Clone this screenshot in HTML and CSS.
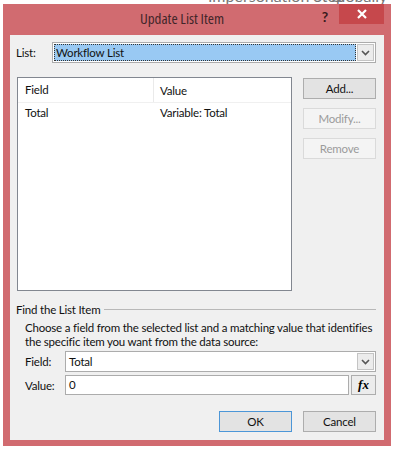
FILE: index.html
```html
<!DOCTYPE html>
<html lang="en">

<head>
    <meta charset="UTF-8">
    <title>Update List Item</title>
    <link rel="stylesheet" href="styles.css">
</head>

<body>

    <div class="backdrop">
        <span class="bg-a">Impersonation Step</span>
        <span class="bg-b">Globally to W</span>
    </div>

    <div class="dialog">

        <div class="titlebar">
            <div class="title">Update List Item</div>
            <div class="help">?</div>
            <div class="close">
                <svg width="12" height="12" viewBox="0 0 12 12">
                    <path d="M2 2 L10 10 M10 2 L2 10" stroke="#fff" stroke-width="2.2" />
                </svg>
            </div>
        </div>

        <div class="content">

            <div class="list-row">
                <label class="lbl-list">List:</label>
                <div class="combo">
                    <div class="combo-text selected">Workflow List</div>
                    <div class="combo-btn">
                        <svg width="9" height="6" viewBox="0 0 9 6">
                            <path d="M1 1 L4.5 4.5 L8 1" fill="none" stroke="#555" stroke-width="1.6" />
                        </svg>
                    </div>
                </div>
            </div>

            <div class="main-row">
                <div class="listview">
                    <div class="lv-head">
                        <div class="col-field">Field</div>
                        <div class="col-value">Value</div>
                    </div>
                    <div class="lv-row">
                        <div class="col-field">Total</div>
                        <div class="col-value">Variable: Total</div>
                    </div>
                </div>
                <div class="side-buttons">
                    <button class="btn">Add...</button>
                    <button class="btn" disabled>Modify...</button>
                    <button class="btn" disabled>Remove</button>
                </div>
            </div>

            <div class="group">
                <div class="group-title">
                    <span>Find the List Item</span>
                    <div class="group-line"></div>
                </div>
                <div class="group-body">
                    <p class="desc">Choose a field from the selected list and a matching value that identifies the specific item you want from the data source:</p>
                    <div class="field-row">
                        <label class="lbl-field">Field:</label>
                        <div class="combo">
                            <div class="combo-text">Total</div>
                            <div class="combo-btn">
                                <svg width="9" height="6" viewBox="0 0 9 6">
                                    <path d="M1 1 L4.5 4.5 L8 1" fill="none" stroke="#555" stroke-width="1.6" />
                                </svg>
                            </div>
                        </div>
                    </div>
                    <div class="field-row value-row">
                        <label class="lbl-field">Value:</label>
                        <div class="textbox">0</div>
                        <button class="fx-btn">fx</button>
                    </div>
                </div>
            </div>

            <div class="footer">
                <button class="btn btn-ok">OK</button>
                <button class="btn">Cancel</button>
            </div>

        </div>
    </div>

</body>

</html>
```

FILE: styles.css
```css
body {
    margin: 0;
    background-color: #fff;
    font-family: Lato, "Noto Sans", sans-serif;
    font-size: 11.5px;
    letter-spacing: -0.2px;
    color: #111;
    width: 395px;
    height: 451px;
    overflow: hidden;
    position: relative;
}

.backdrop {
    position: absolute;
    top: -14px;
    left: 0;
    width: 395px;
    height: 20px;
    color: #777;
    font-size: 16px;
    letter-spacing: 0;
    z-index: 0;
}

.bg-a {
    position: absolute;
    left: 208px;
    top: 0;
}

.bg-b {
    position: absolute;
    left: 330px;
    top: 0;
}

.dialog {
    position: absolute;
    z-index: 1;
    top: 4px;
    left: 3px;
    width: 388px;
    height: 442px;
    background-color: #d16b70;
    box-sizing: border-box;
    padding: 0 7px 6px 7px;
    display: flex;
    flex-direction: column;
}

.titlebar {
    height: 31px;
    display: flex;
    align-items: flex-start;
    position: relative;
}

.title {
    flex: 1;
    text-align: center;
    font-family: "Open Sans", Lato, sans-serif;
    font-stretch: 75%;
    font-size: 15px;
    letter-spacing: 0;
    color: #42262a;
    padding-top: 4px;
    padding-right: 30px;
}

.help {
    position: absolute;
    right: 56px;
    top: 4px;
    font-weight: bold;
    font-size: 14px;
    color: #3a1a1c;
}

.close {
    position: absolute;
    right: 0;
    top: 0;
    width: 45px;
    height: 20px;
    background-color: #c6484c;
    display: flex;
    align-items: center;
    justify-content: center;
}

.content {
    flex: 1;
    background-color: #f0f0f0;
    padding: 7px 8px 0 6px;
    display: flex;
    flex-direction: column;
}

.list-row {
    display: flex;
    align-items: center;
    height: 21px;
}

.lbl-list {
    width: 36px;
}

.combo {
    flex: 1;
    height: 21px;
    box-sizing: border-box;
    border: 1px solid #acacac;
    background-color: #fff;
    display: flex;
    padding: 1px;
}

.combo-text {
    flex: 1;
    padding-left: 2px;
    line-height: 17px;
}

.combo-text.selected {
    background-color: #99c9f3;
    outline: 1px dotted #333;
    outline-offset: -1px;
}

.combo-btn {
    width: 17px;
    margin-left: 1px;
    background-color: #ececec;
    border: 1px solid #c4c4c4;
    box-sizing: border-box;
    display: flex;
    align-items: center;
    justify-content: center;
}

.main-row {
    display: flex;
    margin-top: 14px;
    margin-left: 1px;
    gap: 11px;
}

.listview {
    width: 275px;
    height: 214px;
    box-sizing: border-box;
    border: 1px solid #828790;
    background-color: #fff;
}

.lv-head,
.lv-row {
    display: flex;
    height: 24px;
    align-items: center;
}

.lv-head {
    border-bottom: 1px solid #f0f0f0;
}

.lv-row {
    height: 19px;
}

.col-field {
    width: 136px;
    box-sizing: border-box;
    padding-left: 7px;
}

.lv-head .col-field {
    border-right: 1px solid #eaeaea;
    height: 24px;
    line-height: 24px;
}

.col-value {
    padding-left: 6px;
}

.side-buttons {
    display: flex;
    flex-direction: column;
    gap: 9px;
    padding-top: 1px;
}

.btn {
    width: 73px;
    height: 21px;
    font-family: inherit;
    font-size: 11.5px;
    letter-spacing: inherit;
    color: #111;
    background-color: #e3e3e3;
    border: 1px solid #adadad;
    padding: 0;
}

.btn:disabled {
    background-color: #f4f4f4;
    border-color: #dadada;
    color: #9b9b9b;
}

.btn-ok {
    border-color: #4c96d7;
}

.group {
    margin-top: 10px;
}

.group-title {
    display: flex;
    align-items: center;
    gap: 4px;
    height: 16px;
}

.group-line {
    flex: 1;
    height: 1px;
    background-color: #b8b8b8;
}

.group-body {
    padding-left: 9px;
}

.desc {
    margin: 4px 0 0;
    line-height: 14px;
}

.field-row {
    display: flex;
    align-items: center;
    margin-top: 2px;
}

.value-row {
    margin-top: 3px;
    gap: 2px;
}

.lbl-field {
    width: 40px;
}

.value-row .lbl-field {
    width: 38px;
}

.textbox {
    flex: 1;
    height: 20px;
    box-sizing: border-box;
    border: 1px solid #acacac;
    background-color: #fff;
    padding-left: 3px;
    line-height: 18px;
}

.fx-btn {
    width: 25px;
    height: 20px;
    padding: 0;
    background-color: #ececec;
    border: 1px solid #adadad;
    font-family: "Liberation Serif", serif;
    font-style: italic;
    font-weight: bold;
    font-size: 13px;
}

.footer {
    display: flex;
    justify-content: flex-end;
    gap: 11px;
    margin-top: 16px;
}
```
